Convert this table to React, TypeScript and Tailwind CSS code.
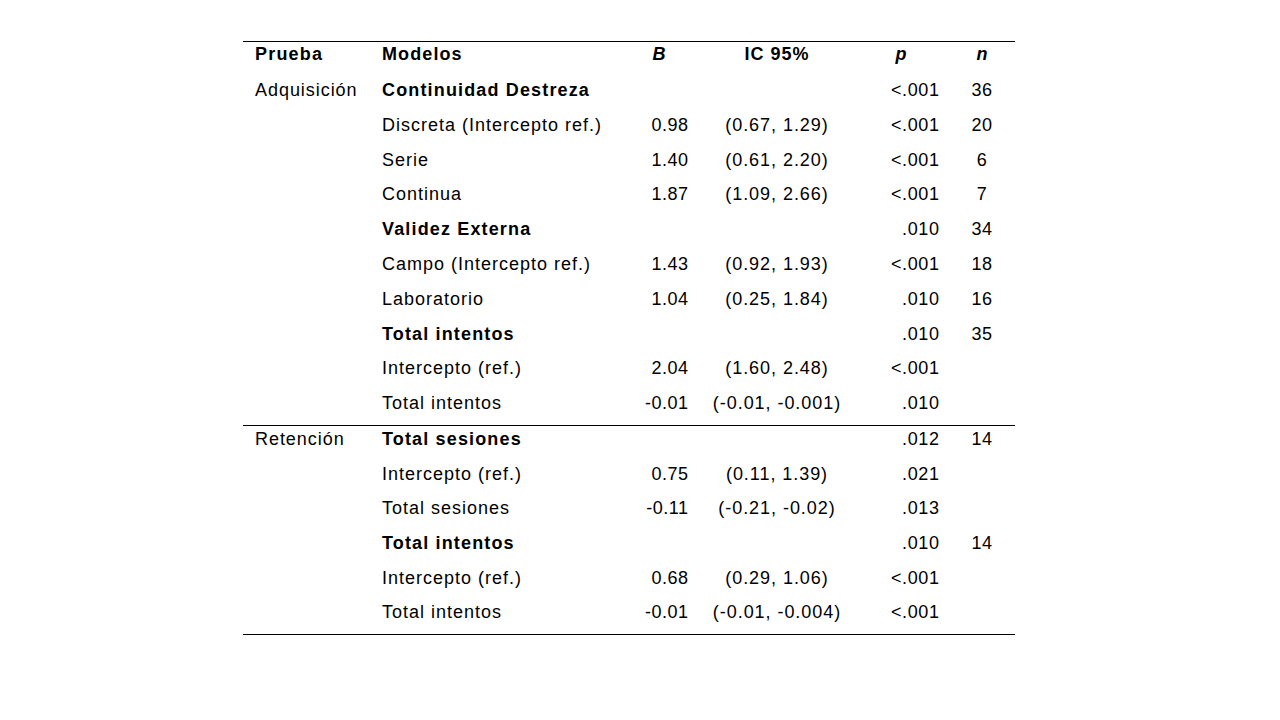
import React from "react";

type Row = {
  prueba?: string;
  modelo: string;
  bold?: boolean;
  b?: string;
  ic?: string;
  p?: string;
  n?: string;
};

const section1: Row[] = [
  { prueba: "Adquisición", modelo: "Continuidad Destreza", bold: true, p: "<.001", n: "36" },
  { modelo: "Discreta (Intercepto ref.)", b: "0.98", ic: "(0.67, 1.29)", p: "<.001", n: "20" },
  { modelo: "Serie", b: "1.40", ic: "(0.61, 2.20)", p: "<.001", n: "6" },
  { modelo: "Continua", b: "1.87", ic: "(1.09, 2.66)", p: "<.001", n: "7" },
  { modelo: "Validez Externa", bold: true, p: ".010", n: "34" },
  { modelo: "Campo (Intercepto ref.)", b: "1.43", ic: "(0.92, 1.93)", p: "<.001", n: "18" },
  { modelo: "Laboratorio", b: "1.04", ic: "(0.25, 1.84)", p: ".010", n: "16" },
  { modelo: "Total intentos", bold: true, p: ".010", n: "35" },
  { modelo: "Intercepto (ref.)", b: "2.04", ic: "(1.60, 2.48)", p: "<.001" },
  { modelo: "Total intentos", b: "-0.01", ic: "(-0.01, -0.001)", p: ".010" },
];

const section2: Row[] = [
  { prueba: "Retención", modelo: "Total sesiones", bold: true, p: ".012", n: "14" },
  { modelo: "Intercepto (ref.)", b: "0.75", ic: "(0.11, 1.39)", p: ".021" },
  { modelo: "Total sesiones", b: "-0.11", ic: "(-0.21, -0.02)", p: ".013" },
  { modelo: "Total intentos", bold: true, p: ".010", n: "14" },
  { modelo: "Intercepto (ref.)", b: "0.68", ic: "(0.29, 1.06)", p: "<.001" },
  { modelo: "Total intentos", b: "-0.01", ic: "(-0.01, -0.004)", p: "<.001" },
];

const grid = "grid grid-cols-[127px_260px_68px_158px_93px_66px]";

function DataRow({ r, h }: { r: Row; h: string }) {
  return (
    <div className={`${grid} ${h} pt-[3px] leading-[20px]`}>
      <div className="pl-[12px] whitespace-nowrap tracking-[0.95px]">{r.prueba ?? ""}</div>
      <div className={`pl-[12px] whitespace-nowrap ${r.bold ? "font-bold tracking-[1.15px]" : "tracking-[1px]"}`}>
        {r.modelo}
      </div>
      <div className="pr-[9.5px] text-right whitespace-nowrap tracking-[0.5px]">{r.b ?? ""}</div>
      <div className="text-center whitespace-nowrap tracking-[0.95px]">{r.ic ?? ""}</div>
      <div className="pr-[9.5px] text-right whitespace-nowrap tracking-[0.6px]">{r.p ?? ""}</div>
      <div className="text-center whitespace-nowrap tracking-[0.5px]">{r.n ?? ""}</div>
    </div>
  );
}

export default function App() {
  return (
    <div
      className="w-[1280px] h-[720px] bg-white text-black text-[18px] pl-[243px] pt-[41px]"
      style={{ fontFamily: '"Liberation Sans", Arial, sans-serif' }}
    >
      <div className="w-[772px]">
        <div className="h-px bg-black" />
        <div className={`${grid} h-[35px] pt-[2px] leading-[20px] font-bold`}>
          <div className="pl-[12px] tracking-[1.2px]">Prueba</div>
          <div className="pl-[12px] tracking-[1.1px]">Modelos</div>
          <div className="pr-[10px] text-center italic">B</div>
          <div className="text-center tracking-[1px]">IC 95%</div>
          <div className="pl-[7px] pr-[10px] text-center italic">p</div>
          <div className="text-center italic">n</div>
        </div>
        {section1.map((r, i) => (
          <DataRow key={`a${i}`} r={r} h="h-[34.8px]" />
        ))}
        <div className="h-px bg-black" />
        {section2.map((r, i) => (
          <DataRow key={`b${i}`} r={r} h="h-[34.7px]" />
        ))}
        <div className="h-px bg-black" />
      </div>
    </div>
  );
}
